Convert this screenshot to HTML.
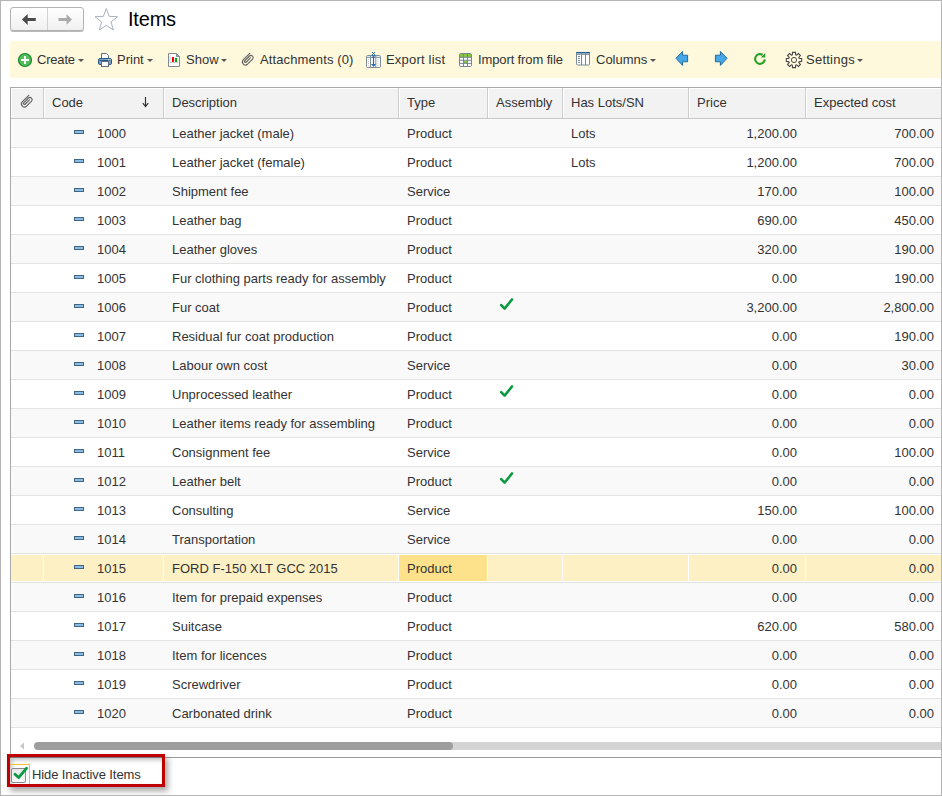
<!DOCTYPE html>
<html><head><meta charset="utf-8"><title>Items</title>
<style>
html,body{margin:0;padding:0;}
body{width:942px;height:796px;position:relative;overflow:hidden;background:#fff;font-family:"Liberation Sans",sans-serif;font-size:13px;color:#333;}
#frame{position:absolute;left:0;top:0;width:940px;height:794px;border:1px solid #b4b4b4;}
i{display:block;position:absolute;}
.t,.ht{position:absolute;white-space:nowrap;line-height:15px;}
/* nav buttons */
#nav{position:absolute;left:10px;top:7px;width:72px;height:22px;border:1px solid #b3b3b3;border-radius:3px;background:linear-gradient(#ffffff,#f0f0f0);box-shadow:0 1px 0 #b8b8b8;}
#nav .div{left:36px;top:0;width:1px;height:22px;background:#d2d2d2;}
#title{position:absolute;left:128px;top:7px;font-size:20px;line-height:24px;color:#000;letter-spacing:-0.2px;}
/* toolbar */
#tb{position:absolute;left:10px;top:41px;width:931px;height:37px;background:#fef9dc;}
.tt{position:absolute;top:52px;line-height:15px;white-space:nowrap;color:#333;}
.dd{position:absolute;top:59px;width:0;height:0;border-left:3px solid transparent;border-right:3px solid transparent;border-top:3px solid #555;}
/* grid */
#grid{position:absolute;left:0;top:0;}
#hdr{position:absolute;left:0;top:0;}
#gframe{position:absolute;}
.gl{position:absolute;background:#a8a8a8;}
.hc{position:absolute;top:89px;height:28px;background:#f2f2f2;border-left:1px solid #fff;border-top:1px solid #fff;box-sizing:border-box;}
.hc{top:88px;height:30px;}
.ht{top:95px;color:#333;}
.row{position:absolute;left:11px;width:930px;height:28px;background:#fff;border-bottom:1px solid #e3e3e3;}
.row.alt{background:#f9f9f9;}
.row .t{top:7px;}
.row.sel{background:#fdf0c5;box-shadow:inset 0 1px 0 #fff,inset 0 -1px 0 #fff;}
.row .vs{top:0;width:1px;height:28px;background:#fff;}
.row .cur{left:388px;top:1px;width:88px;height:26px;background:#fde28b;}
.mi{left:63px;top:11px;width:8px;height:2px;border:1px solid #3f6585;background:#8bbbe2;}
.chk{position:absolute;left:488px;top:5px;}
#hscroll{position:absolute;left:0;top:0;}
#hscroll .trk{left:38px;top:742px;width:903px;height:8px;background:#d4d4d4;}
#hscroll .thumb{left:34px;top:742px;width:419px;height:8px;border-radius:4px;background:#9e9e9e;}
#bottom{position:absolute;left:0;top:0;}
#hl{position:absolute;left:7px;top:754px;width:152px;height:27px;border:3px solid #c00000;box-shadow:3px 4px 6px rgba(0,0,0,0.35), inset 2px 3px 4px rgba(0,0,0,0.25);}
#cbfocus{position:absolute;left:10px;top:764px;width:20px;height:20px;border-top:1px solid #f5c030;border-right:1px solid #f5c030;box-sizing:border-box;}
#cb{position:absolute;left:11px;top:768px;width:13px;height:13px;border:1px solid #8a8a8a;border-radius:2px;background:linear-gradient(#e8e8e8,#fafafa);}

</style></head>
<body>
<div id="nav"><i class="div"></i>
<svg style="position:absolute;left:11px;top:6px;overflow:visible" width="16" height="12" viewBox="0 0 16 12"><path d="M-0.1 5.5 L5.7 0.1 V4 H13.8 V6.9 H5.7 V10.9 Z" fill="#4b4b4b"/></svg>
<svg style="position:absolute;left:46px;top:6px" width="16" height="12" viewBox="0 0 16 12"><path d="M15 5.5 L9.5 0.2 V4 H1.5 V7 H9.5 V10.8 Z" fill="#ababab"/></svg>
</div>
<svg style="position:absolute;left:90px;top:5px" width="32" height="30" viewBox="0 0 32 30"><path d="M16.30 3.50 L19.24 11.35 L27.62 11.72 L21.06 16.95 L23.29 25.03 L16.30 20.40 L9.31 25.03 L11.54 16.95 L4.98 11.72 L13.36 11.35 Z" fill="none" stroke="#a9b3be" stroke-width="1" stroke-linejoin="miter"/></svg>
<div id="title">Items</div>
<div id="tb"></div>
<!-- Create -->
<svg style="position:absolute;left:17px;top:52px" width="16" height="16" viewBox="0 0 16 16"><circle cx="8" cy="8" r="6.5" fill="#56bb5d" stroke="#15892b" stroke-width="1.2"/><path d="M8 4 V12 M4 8 H12" stroke="#fff" stroke-width="1.9"/></svg>
<span class="tt" style="left:37px;letter-spacing:-0.2px">Create</span><i class="dd" style="left:78px"></i>
<!-- Print -->
<svg style="position:absolute;left:97px;top:52px" width="16" height="16" viewBox="0 0 16 16">
<path d="M4.5 1.5 H9.5 L11.5 3.5 V7 H4.5 Z" fill="#fff" stroke="#5d6f80" stroke-width="1"/>
<rect x="1.5" y="6.5" width="13" height="6" rx="1.5" fill="#7aa3c8" stroke="#2d5a80" stroke-width="1"/>
<path d="M2.5 8.5 H13.5" stroke="#2d5a80" stroke-width="1"/>
<rect x="11" y="7.3" width="1" height="1" fill="#fff"/><rect x="12.6" y="7.3" width="1" height="1" fill="#fff"/>
<rect x="4.5" y="9.5" width="7" height="5" fill="#fff" stroke="#5d6f80" stroke-width="1"/>
</svg>
<span class="tt" style="left:117px">Print</span><i class="dd" style="left:147px"></i>
<!-- Show -->
<svg style="position:absolute;left:167px;top:52px" width="16" height="16" viewBox="0 0 16 16">
<path d="M1.5 1.5 H9.5 L12.5 4.5 V14.5 H1.5 Z" fill="#fff" stroke="#7f8c96" stroke-width="1"/>
<path d="M9.5 1.5 V4.5 H12.5" fill="#9aa6ae" stroke="#7f8c96" stroke-width="1"/>
<path d="M3 3.5 V10.5 H11" fill="none" stroke="#b6c2ca" stroke-width="0.8"/>
<rect x="5" y="5" width="2" height="5" fill="#f00"/><rect x="8" y="6" width="2" height="4" fill="#0a0"/>
</svg>
<span class="tt" style="left:186px">Show</span><i class="dd" style="left:221px"></i>
<!-- Attachments -->
<svg style="position:absolute;left:239px;top:50px" width="20" height="20" viewBox="0 0 20 20"><path d="M10.8 3.3 L4.2 9.9 A3.05 3.05 0 0 0 8.5 14.2 L13.6 9.1 A2.2 2.2 0 0 0 10.5 6 L5.7 10.8 A1 1 0 0 0 7.1 12.2 L11.4 7.9" fill="none" stroke="#606060" stroke-width="1.15" stroke-linecap="round"/></svg>
<span class="tt" style="left:260px;letter-spacing:0.12px">Attachments (0)</span>
<!-- Export list -->
<svg style="position:absolute;left:365px;top:51px" width="18" height="18" viewBox="0 0 18 18">
<rect x="1.5" y="4.5" width="14" height="12" rx="1.2" fill="#fff" stroke="#7e8d97" stroke-width="1"/>
<path d="M1.5 6.3 H15.5" stroke="#7e8d97" stroke-width="1"/>
<path d="M5.5 4.5 V16.5 M10.8 4.5 V16.5" stroke="#7e8d97" stroke-width="1"/>
<path d="M3.5 8 V15 M13 8 V15" stroke="#c0c8ce" stroke-width="1" stroke-dasharray="1 1"/>
<path d="M8.5 6 V14" stroke="#2c6aa6" stroke-width="1.2"/>
<path d="M6 13 L8.5 16 L11 13 Z" fill="#2c6aa6"/>
<path d="M7 1 L10 4 M10 1 L7 4 M7 4 L10 6.5 M10 4 L7 6.5" stroke="#2c6aa6" stroke-width="1"/>
</svg>
<span class="tt" style="left:386px;letter-spacing:0.2px">Export list</span>
<!-- Import from file -->
<svg style="position:absolute;left:458px;top:52px" width="16" height="16" viewBox="0 0 16 16">
<rect x="1.5" y="1.5" width="12" height="13" rx="1.2" fill="#fff" stroke="#778894" stroke-width="1"/>
<rect x="2" y="2" width="11" height="3.3" fill="#86c540"/>
<rect x="6" y="8.8" width="3" height="2.2" fill="#86c540"/>
<path d="M1.5 5.3 H13.5 M1.5 8.3 H13.5 M1.5 11.4 H13.5 M5.5 1.5 V14.5 M9.5 1.5 V14.5" stroke="#778894" stroke-width="1"/>
</svg>
<span class="tt" style="left:478px;letter-spacing:-0.12px">Import from file</span>
<!-- Columns -->
<svg style="position:absolute;left:575px;top:51px" width="16" height="16" viewBox="0 0 16 16">
<rect x="1.5" y="1.5" width="13" height="12.5" rx="1.2" fill="#fff" stroke="#7a8a96" stroke-width="1"/>
<path d="M1.2 1.7 H14.8" stroke="#1f5f96" stroke-width="1.5"/>
<path d="M1.5 3.3 H14.5 M6.5 1.5 V14 M10.5 1.5 V14" stroke="#7a8a96" stroke-width="1"/>
<path d="M3 5.5 H5 M3 7.5 H5 M3 9.5 H5 M3 11.5 H5" stroke="#7a8a96" stroke-width="1"/>
</svg>
<span class="tt" style="left:596px">Columns</span><i class="dd" style="left:650px"></i>
<!-- blue arrows -->
<svg style="position:absolute;left:674px;top:50px" width="16" height="17" viewBox="0 0 16 17"><path d="M2 8.3 L8.6 1.5 V5.2 H13.6 V11.8 H8.6 V15.4 Z" fill="#45a6e8" stroke="#226b9e" stroke-width="1" stroke-linejoin="round"/></svg>
<svg style="position:absolute;left:713px;top:50px" width="16" height="17" viewBox="0 0 16 17"><path d="M14 8.3 L7.4 1.5 V5.2 H2.4 V11.8 H7.4 V15.4 Z" fill="#45a6e8" stroke="#226b9e" stroke-width="1" stroke-linejoin="round"/></svg>
<!-- refresh -->
<svg style="position:absolute;left:752px;top:51px" width="16" height="16" viewBox="0 0 16 16"><path d="M12.83 8.42 A4.85 4.85 0 1 1 10.6 3.9" fill="none" stroke="#27a027" stroke-width="2.1"/><path d="M8.8 6.5 L13.3 6.5 L13.3 2 Z" fill="#27a027"/></svg>
<!-- gear -->
<svg style="position:absolute;left:785px;top:51px" width="18" height="18" viewBox="0 0 18 18"><path d="M14.25 7.37 L16.66 7.53 L16.66 10.47 L14.25 10.63 A5.5 5.5 0 0 1 13.86 11.57 L15.46 13.37 L13.37 15.46 L11.57 13.86 A5.5 5.5 0 0 1 10.63 14.25 L10.47 16.66 L7.53 16.66 L7.37 14.25 A5.5 5.5 0 0 1 6.43 13.86 L4.63 15.46 L2.54 13.37 L4.14 11.57 A5.5 5.5 0 0 1 3.75 10.63 L1.34 10.47 L1.34 7.53 L3.75 7.37 A5.5 5.5 0 0 1 4.14 6.43 L2.54 4.63 L4.63 2.54 L6.43 4.14 A5.5 5.5 0 0 1 7.37 3.75 L7.53 1.34 L10.47 1.34 L10.63 3.75 A5.5 5.5 0 0 1 11.57 4.14 L13.37 2.54 L15.46 4.63 L13.86 6.43 A5.5 5.5 0 0 1 14.25 7.37 Z" fill="none" stroke="#484848" stroke-width="1.1"/><circle cx="9" cy="9" r="2.6" fill="none" stroke="#4d4d4d" stroke-width="1"/></svg>
<span class="tt" style="left:806px;letter-spacing:0.25px">Settings</span><i class="dd" style="left:857px"></i>
<!-- grid frame -->
<i class="gl" style="left:10px;top:87px;width:931px;height:1px"></i>
<i class="gl" style="left:10px;top:87px;width:1px;height:671px"></i>
<i class="gl" style="left:10px;top:757px;width:931px;height:1px;background:#9a9a9a"></i>
<i class="gl" style="left:11px;top:118px;width:930px;height:1px;background:#c9c9c9"></i>
<i class="gl" style="left:43px;top:88px;width:1px;height:30px;background:#cdcdcd"></i>
<i class="gl" style="left:163px;top:88px;width:1px;height:30px;background:#cdcdcd"></i>
<i class="gl" style="left:398px;top:88px;width:1px;height:30px;background:#cdcdcd"></i>
<i class="gl" style="left:487px;top:88px;width:1px;height:30px;background:#cdcdcd"></i>
<i class="gl" style="left:562px;top:88px;width:1px;height:30px;background:#cdcdcd"></i>
<i class="gl" style="left:688px;top:88px;width:1px;height:30px;background:#cdcdcd"></i>
<i class="gl" style="left:805px;top:88px;width:1px;height:30px;background:#cdcdcd"></i>

<div id="grid">
<div id="hdr">
  <div class="hc" style="left:11px;width:32px"></div>
  <div class="hc" style="left:44px;width:119px"></div>
  <div class="hc" style="left:164px;width:234px"></div>
  <div class="hc" style="left:399px;width:88px"></div>
  <div class="hc" style="left:488px;width:74px"></div>
  <div class="hc" style="left:563px;width:125px"></div>
  <div class="hc" style="left:689px;width:116px"></div>
  <div class="hc" style="left:806px;width:200px"></div>
  <svg style="position:absolute;left:18px;top:92px" width="20" height="20" viewBox="0 0 20 20"><path d="M10.8 3.3 L4.2 9.9 A3.05 3.05 0 0 0 8.5 14.2 L13.6 9.1 A2.2 2.2 0 0 0 10.5 6 L5.7 10.8 A1 1 0 0 0 7.1 12.2 L11.4 7.9" fill="none" stroke="#606060" stroke-width="1.15" stroke-linecap="round"/></svg>
  <span class="ht" style="left:52px">Code</span>
  <svg style="position:absolute;left:141px;top:96px" width="9" height="12" viewBox="0 0 9 12"><path d="M4.5 1 V10" stroke="#333" stroke-width="1.2"/><path d="M1.8 7.2 L4.5 10.6 L7.2 7.2" fill="none" stroke="#333" stroke-width="1.2"/></svg>
  <span class="ht" style="left:172px">Description</span>
  <span class="ht" style="left:407px">Type</span>
  <span class="ht" style="left:496px">Assembly</span>
  <span class="ht" style="left:571px">Has Lots/SN</span>
  <span class="ht" style="left:697px">Price</span>
  <span class="ht" style="left:814px">Expected cost</span>
</div>
<div class="row alt" style="top:119px"><i class="mi"></i><span class="t" style="left:86px">1000</span><span class="t" style="left:161px">Leather jacket (male)</span><span class="t" style="left:396px">Product</span><span class="t" style="left:560px">Lots</span><span class="t r" style="right:144px">1,200.00</span><span class="t r" style="right:7px">700.00</span></div><div class="row" style="top:148px"><i class="mi"></i><span class="t" style="left:86px">1001</span><span class="t" style="left:161px">Leather jacket (female)</span><span class="t" style="left:396px">Product</span><span class="t" style="left:560px">Lots</span><span class="t r" style="right:144px">1,200.00</span><span class="t r" style="right:7px">700.00</span></div><div class="row alt" style="top:177px"><i class="mi"></i><span class="t" style="left:86px">1002</span><span class="t" style="left:161px">Shipment fee</span><span class="t" style="left:396px">Service</span><span class="t r" style="right:144px">170.00</span><span class="t r" style="right:7px">100.00</span></div><div class="row" style="top:206px"><i class="mi"></i><span class="t" style="left:86px">1003</span><span class="t" style="left:161px">Leather bag</span><span class="t" style="left:396px">Product</span><span class="t r" style="right:144px">690.00</span><span class="t r" style="right:7px">450.00</span></div><div class="row alt" style="top:235px"><i class="mi"></i><span class="t" style="left:86px">1004</span><span class="t" style="left:161px">Leather gloves</span><span class="t" style="left:396px">Product</span><span class="t r" style="right:144px">320.00</span><span class="t r" style="right:7px">190.00</span></div><div class="row" style="top:264px"><i class="mi"></i><span class="t" style="left:86px">1005</span><span class="t" style="left:161px">Fur clothing parts ready for assembly</span><span class="t" style="left:396px">Product</span><span class="t r" style="right:144px">0.00</span><span class="t r" style="right:7px">190.00</span></div><div class="row alt" style="top:293px"><i class="mi"></i><span class="t" style="left:86px">1006</span><span class="t" style="left:161px">Fur coat</span><span class="t" style="left:396px">Product</span><svg class="chk" width="16" height="14" viewBox="0 0 16 14"><path d="M2.2 7.2 L5.6 10.6 L13 1.5" fill="none" stroke="#0b9a41" stroke-width="2.6" stroke-linecap="round" stroke-linejoin="round"/></svg><span class="t r" style="right:144px">3,200.00</span><span class="t r" style="right:7px">2,800.00</span></div><div class="row" style="top:322px"><i class="mi"></i><span class="t" style="left:86px">1007</span><span class="t" style="left:161px">Residual fur coat production</span><span class="t" style="left:396px">Product</span><span class="t r" style="right:144px">0.00</span><span class="t r" style="right:7px">190.00</span></div><div class="row alt" style="top:351px"><i class="mi"></i><span class="t" style="left:86px">1008</span><span class="t" style="left:161px">Labour own cost</span><span class="t" style="left:396px">Service</span><span class="t r" style="right:144px">0.00</span><span class="t r" style="right:7px">30.00</span></div><div class="row" style="top:380px"><i class="mi"></i><span class="t" style="left:86px">1009</span><span class="t" style="left:161px">Unprocessed leather</span><span class="t" style="left:396px">Product</span><svg class="chk" width="16" height="14" viewBox="0 0 16 14"><path d="M2.2 7.2 L5.6 10.6 L13 1.5" fill="none" stroke="#0b9a41" stroke-width="2.6" stroke-linecap="round" stroke-linejoin="round"/></svg><span class="t r" style="right:144px">0.00</span><span class="t r" style="right:7px">0.00</span></div><div class="row alt" style="top:409px"><i class="mi"></i><span class="t" style="left:86px">1010</span><span class="t" style="left:161px">Leather items ready for assembling</span><span class="t" style="left:396px">Product</span><span class="t r" style="right:144px">0.00</span><span class="t r" style="right:7px">0.00</span></div><div class="row" style="top:438px"><i class="mi"></i><span class="t" style="left:86px">1011</span><span class="t" style="left:161px">Consignment fee</span><span class="t" style="left:396px">Service</span><span class="t r" style="right:144px">0.00</span><span class="t r" style="right:7px">100.00</span></div><div class="row alt" style="top:467px"><i class="mi"></i><span class="t" style="left:86px">1012</span><span class="t" style="left:161px">Leather belt</span><span class="t" style="left:396px">Product</span><svg class="chk" width="16" height="14" viewBox="0 0 16 14"><path d="M2.2 7.2 L5.6 10.6 L13 1.5" fill="none" stroke="#0b9a41" stroke-width="2.6" stroke-linecap="round" stroke-linejoin="round"/></svg><span class="t r" style="right:144px">0.00</span><span class="t r" style="right:7px">0.00</span></div><div class="row" style="top:496px"><i class="mi"></i><span class="t" style="left:86px">1013</span><span class="t" style="left:161px">Consulting</span><span class="t" style="left:396px">Service</span><span class="t r" style="right:144px">150.00</span><span class="t r" style="right:7px">100.00</span></div><div class="row alt" style="top:525px"><i class="mi"></i><span class="t" style="left:86px">1014</span><span class="t" style="left:161px">Transportation</span><span class="t" style="left:396px">Service</span><span class="t r" style="right:144px">0.00</span><span class="t r" style="right:7px">0.00</span></div><div class="row sel" style="top:554px"><i class="vs" style="left:32px"></i><i class="vs" style="left:152px"></i><i class="vs" style="left:387px"></i><i class="vs" style="left:476px"></i><i class="vs" style="left:551px"></i><i class="vs" style="left:677px"></i><i class="vs" style="left:794px"></i><i class="cur"></i><i class="mi"></i><span class="t" style="left:86px">1015</span><span class="t" style="left:161px">FORD F-150 XLT GCC 2015</span><span class="t" style="left:396px">Product</span><span class="t r" style="right:144px">0.00</span><span class="t r" style="right:7px">0.00</span></div><div class="row alt" style="top:583px"><i class="mi"></i><span class="t" style="left:86px">1016</span><span class="t" style="left:161px">Item for prepaid expenses</span><span class="t" style="left:396px">Product</span><span class="t r" style="right:144px">0.00</span><span class="t r" style="right:7px">0.00</span></div><div class="row" style="top:612px"><i class="mi"></i><span class="t" style="left:86px">1017</span><span class="t" style="left:161px">Suitcase</span><span class="t" style="left:396px">Product</span><span class="t r" style="right:144px">620.00</span><span class="t r" style="right:7px">580.00</span></div><div class="row alt" style="top:641px"><i class="mi"></i><span class="t" style="left:86px">1018</span><span class="t" style="left:161px">Item for licences</span><span class="t" style="left:396px">Product</span><span class="t r" style="right:144px">0.00</span><span class="t r" style="right:7px">0.00</span></div><div class="row" style="top:670px"><i class="mi"></i><span class="t" style="left:86px">1019</span><span class="t" style="left:161px">Screwdriver</span><span class="t" style="left:396px">Product</span><span class="t r" style="right:144px">0.00</span><span class="t r" style="right:7px">0.00</span></div><div class="row alt" style="top:699px"><i class="mi"></i><span class="t" style="left:86px">1020</span><span class="t" style="left:161px">Carbonated drink</span><span class="t" style="left:396px">Product</span><span class="t r" style="right:144px">0.00</span><span class="t r" style="right:7px">0.00</span></div>
<div id="hscroll"><i class="trk"></i><i class="thumb"></i><svg style="position:absolute;left:19px;top:742px" width="6" height="8" viewBox="0 0 6 8"><path d="M5 0.5 L1 4 L5 7.5 Z" fill="#c8c8c8"/></svg></div>
</div>
<div id="bottom">
  <div id="hl"></div>
  <div id="cbfocus"></div>
  <div id="cb"></div>
  <svg style="position:absolute;left:12px;top:765px" width="18" height="16" viewBox="0 0 18 16"><path d="M3 9.2 L6.6 12.6 L14.6 3.2" fill="none" stroke="#0b9a41" stroke-width="2.8" stroke-linecap="round" stroke-linejoin="round"/></svg>
  <span class="t" style="left:32px;top:767px;letter-spacing:-0.1px">Hide Inactive Items</span>
</div>
<div id="frame"></div>
</body></html>
